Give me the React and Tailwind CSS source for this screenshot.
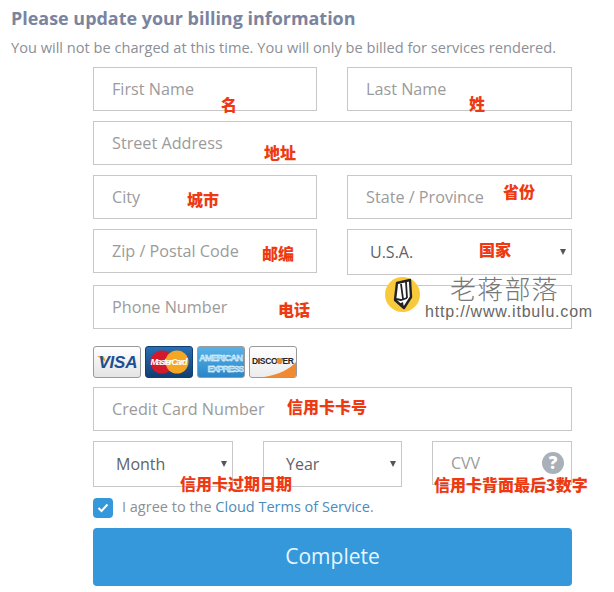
import React from "react";

const CJK = "font-['Noto_Sans_CJK_SC','Liberation_Sans',sans-serif]";

function Field({ label, className = "" }) {
  return (
    <div className={`h-11 border border-[#c8c8c8] bg-white pl-[18px] flex items-center text-[16.2px] text-[#9b9b9b] ${className}`}>
      {label}
    </div>
  );
}

function Select({ label, className = "" }) {
  return (
    <div className={`h-[46px] border border-[#c8c8c8] bg-white pl-[22px] pr-[5px] flex items-center justify-between text-[16px] text-[#5f6368] ${className}`}>
      <span>{label}</span>
      <svg width="6" height="6" viewBox="0 0 6 6"><path d="M0 0h6L3 6z" fill="#555" /></svg>
    </div>
  );
}

function Note({ children, className }) {
  return (
    <span className={`absolute whitespace-nowrap text-[16px] leading-[20px] font-black text-[#ee3a12] ${CJK} ${className}`}>
      {children}
    </span>
  );
}

function CardFrame({ children, className = "" }) {
  return (
    <div className={`w-12 h-8 rounded-[3px] border border-[#9a9a9a] overflow-hidden ${className}`}>
      <svg width="46" height="30" viewBox="0 0 46 30" className="block">{children}</svg>
    </div>
  );
}

export default function App() {
  return (
    <div className="relative w-[614px] h-[592px] overflow-hidden bg-white font-['Open_Sans',sans-serif]">
      <div className="pl-[11px] pt-[6px]">
        <h1 className="text-[17.95px] leading-[24px] font-bold text-[#7a849e]">Please update your billing information</h1>
        <p className="mt-[7px] text-[14.6px] leading-[20px] text-[#8b8f98]">You will not be charged at this time. You will only be billed for services rendered.</p>
      </div>

      <div className="ml-[93px] mt-[10px] w-[479px] flex flex-col">
        <div className="grid grid-cols-[224px_225px] gap-x-[30px]">
          <Field label="First Name" />
          <Field label="Last Name" />
        </div>
        <Field label="Street Address" className="mt-[10px]" />
        <div className="mt-[10px] grid grid-cols-[224px_225px] gap-x-[30px]">
          <Field label="City" />
          <Field label="State / Province" />
        </div>
        <div className="mt-[10px] grid grid-cols-[224px_225px] gap-x-[30px] items-start">
          <Field label="Zip / Postal Code" />
          <Select label="U.S.A." />
        </div>
        <Field label="Phone Number" className="mt-[10px]" />

        <div className="mt-[17px] flex gap-[4px]">
          <CardFrame className="bg-gradient-to-b from-white to-[#e4e4e4]">
            <path d="M3 9l7 0.5 1.5 5z" fill="#e9a21c" />
            <text x="24" y="21" textAnchor="middle" fontFamily="Liberation Sans" fontSize="17" fontWeight="700" fontStyle="italic" fill="#1c4f93" textLength="39">VISA</text>
          </CardFrame>
          <CardFrame className="bg-gradient-to-b from-[#2a6fb0] to-[#123f73] border-[#123f73]">
            <circle cx="16" cy="15" r="11.5" fill="#d5192d" />
            <circle cx="31" cy="15" r="11.5" fill="#f5a623" />
            <text x="23" y="18" textAnchor="middle" fontFamily="Liberation Sans" fontSize="9" fontWeight="700" fontStyle="italic" fill="#fff" textLength="37">MasterCard</text>
          </CardFrame>
          <CardFrame className="bg-gradient-to-b from-[#57b2e8] to-[#2a86c8] border-[#2a86c8]">
            <text x="23" y="13.5" textAnchor="middle" fontFamily="Liberation Sans" fontSize="9.5" fontWeight="700" fill="#8fd0f5" stroke="#fff" strokeWidth="0.35" textLength="44">AMERICAN</text>
            <text x="28" y="25" textAnchor="middle" fontFamily="Liberation Sans" fontSize="9.5" fontWeight="700" fill="#8fd0f5" stroke="#fff" strokeWidth="0.35" textLength="37">EXPRESS</text>
          </CardFrame>
          <CardFrame className="bg-gradient-to-b from-white to-[#ececec]">
            <path d="M14 30C28 28 40 22 46 15V30z" fill="#ef8a32" />
            <text x="23" y="17" textAnchor="middle" fontFamily="Liberation Sans" fontSize="8.5" fontWeight="700" fill="#222" textLength="42">DISCOVER</text>
            <circle cx="29.5" cy="14" r="3" fill="#f08a24" />
          </CardFrame>
        </div>

        <Field label="Credit Card Number" className="mt-[9px]" />

        <div className="mt-[10px] grid grid-cols-[140px_139px_140px] gap-x-[30px] items-start">
          <Select label="Month" />
          <Select label="Year" />
          <div className="h-11 border border-[#c8c8c8] pl-[18px] pr-[7px] flex items-center justify-between text-[16px] text-[#9b9b9b]">
            <span>CVV</span>
            <span className="w-[22px] h-[22px] rounded-full bg-[#a9b0b7] flex items-center justify-center text-[17px] font-extrabold text-white">?</span>
          </div>
        </div>

        <div className="mt-[11px] flex items-start gap-[9px] h-5">
          <span className="w-5 h-5 rounded-[4px] bg-[#3498db] flex items-center justify-center">
            <svg width="12" height="10" viewBox="0 0 12 10"><path d="M1.5 5l3 3 6-6.5" fill="none" stroke="#fff" strokeWidth="2" /></svg>
          </span>
          <span className="text-[14.5px] leading-[18px] text-[#8b8f98]">I agree to the <span className="text-[#4a8cbc]">Cloud Terms of Service</span>.</span>
        </div>

        <button className="mt-[10px] h-[58px] rounded-[4px] bg-[#3498db] text-[21px] text-[#e8f6ff]">Complete</button>
      </div>

      <Note className="left-[221px] top-[94px]">名</Note>
      <Note className="left-[469px] top-[93px]">姓</Note>
      <Note className="left-[264px] top-[142px]">地址</Note>
      <Note className="left-[187px] top-[189px]">城市</Note>
      <Note className="left-[503px] top-[181px]">省份</Note>
      <Note className="left-[262px] top-[243px]">邮编</Note>
      <Note className="left-[479px] top-[239px]">国家</Note>
      <Note className="left-[278px] top-[299px]">电话</Note>
      <Note className="left-[287px] top-[396px]">信用卡卡号</Note>
      <Note className="left-[180px] top-[473px]">信用卡过期日期</Note>
      <Note className="left-[434px] top-[474px]">信用卡背面最后3数字</Note>

      <div className="absolute left-[385px] top-[277px] w-[35px] h-[35px] rounded-full bg-[#f9c93c] flex items-center justify-center">
        <svg width="24" height="34" viewBox="0 0 24 34">
          <path d="M6 5l13-3 1 17-7 11-9-8z" fill="#fff" stroke="#222" strokeWidth="2.4" strokeLinejoin="round" />
          <path d="M10 6l2 15M15 4l1 16M5 21l5 1 6-2" fill="none" stroke="#222" strokeWidth="1.8" />
          <path d="M13 30l-5-4 4-2z" fill="#222" />
        </svg>
      </div>
      <span className="absolute left-[450px] top-[274px] text-[26px] leading-[28px] tracking-[1.2px] text-[#777] font-['Noto_Sans_CJK_SC',sans-serif] font-light">老蒋部落</span>
      <span className="absolute left-[425px] top-[303px] text-[16px] leading-[17px] tracking-[0.8px] text-[#666] font-['Liberation_Sans',sans-serif]">http://www.itbulu.com</span>
    </div>
  );
}
